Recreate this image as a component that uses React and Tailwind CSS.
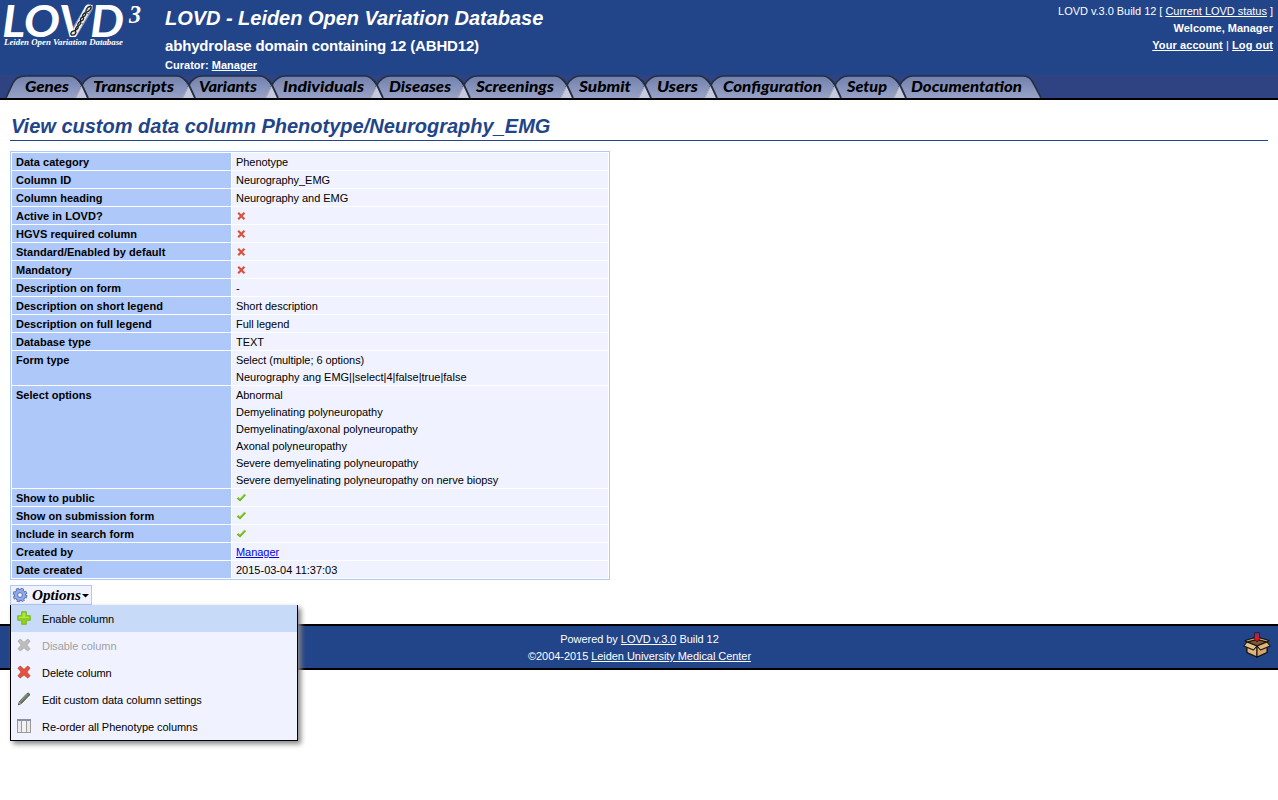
import React from 'react';

const tabs = [
  { label: 'Genes', w: 75, x: 18, tw: 44 },
  { label: 'Transcripts', w: 107, x: 11, tw: 81 },
  { label: 'Variants', w: 83, x: 10, tw: 58 },
  { label: 'Individuals', w: 105, x: 11, tw: 81 },
  { label: 'Diseases', w: 87, x: 12, tw: 62 },
  { label: 'Screenings', w: 103, x: 12, tw: 78 },
  { label: 'Submit', w: 78, x: 12, tw: 52 },
  { label: 'Users', w: 66, x: 12, tw: 41 },
  { label: 'Configuration', w: 124, x: 12, tw: 99 },
  { label: 'Setup', w: 65, x: 12, tw: 40 },
  { label: 'Documentation', w: 135, x: 11, tw: 111 },
];

function Tab({ label, w, x, tw, first, last }) {
  const right = last
    ? `H${w - 12} Q${w - 6} 1 ${w - 3} 6 Q${w} 11 ${w + 6} 23`
    : `H${w - 12} Q${w - 6} 1 ${w} 10 L${w + 6} 23`;
  const left = first ? 'M-1 23 L6 8 Q9 1 19 1' : 'M-6 23 L0 10 Q5 1 13 1';
  return (
    <li className="h-[23px] shrink-0" style={{ width: w }}>
      <a href="#">
        <svg width={w} height="23" className="block overflow-visible">
          <path d={`${left} ${right} Z`} fill="url(#tabFill)" />
          <path d={`${left} ${right}`} fill="none" stroke="#262e42" strokeWidth="1.6" />
          {!first && <path d="M-7 23 L0 10 L6 23 Z" fill="#c5cae0" />}
          {!first && <path d="M-6.5 23 L-1 12" stroke="#a5a9b6" strokeWidth="1.6" />}
          {!first && <path d="M-4 4.5 L0 10 L6 23" fill="none" stroke="#262e42" strokeWidth="1.8" />}
          <text x={x} y="17" textLength={tw} lengthAdjust="spacingAndGlyphs" className="fill-black font-['Lato',sans-serif] text-[15.5px] font-black italic">{label}</text>
        </svg>
      </a>
    </li>
  );
}

const crossPath = 'M1 3 L3 1 L6.5 4.2 L10 1 L12 3 L9 6.5 L12 10 L10 12 L6.5 9 L3 12 L1 10 L4 6.5 Z';

function Cross({ fill, stroke }) {
  return (
    <svg width="14" height="14" viewBox="0 0 13 13" className="block">
      <path d={crossPath} fill={fill} stroke={stroke} strokeWidth=".9" />
    </svg>
  );
}

const No = () => (
  <span className="flex h-[17px] items-center pl-px">
    <svg width="9" height="8" viewBox="0 0 9 8">
      <path d="M1.2 .8 L7.4 7.2 M7.4 .8 L1.2 7.2" stroke="#d9503f" strokeWidth="2.2" />
    </svg>
  </span>
);

const Yes = () => (
  <span className="flex h-[17px] items-center">
    <svg width="11" height="9" viewBox="0 0 11 9">
      <path d="M1.5 4.8 L4 7 L9.2 1.5" fill="none" stroke="#6fb31e" strokeWidth="2.2" />
      <path d="M2 4.5 L4 6.2 L9.2 1" fill="none" stroke="#96dc30" strokeWidth="1" />
    </svg>
  </span>
);

const rows = [
  ['Data category', 'Phenotype'],
  ['Column ID', 'Neurography_EMG'],
  ['Column heading', 'Neurography and EMG'],
  ['Active in LOVD?', <No />],
  ['HGVS required column', <No />],
  ['Standard/Enabled by default', <No />],
  ['Mandatory', <No />],
  ['Description on form', '-'],
  ['Description on short legend', 'Short description'],
  ['Description on full legend', 'Full legend'],
  ['Database type', 'TEXT'],
  ['Form type', <>Select (multiple; 6 options)<br /><span className="tracking-normal">Neurography ang EMG||select|4|false|true|false</span></>],
  ['Select options', <>Abnormal<br />Demyelinating polyneuropathy<br />Demyelinating/axonal polyneuropathy<br />Axonal polyneuropathy<br />Severe demyelinating polyneuropathy<br />Severe demyelinating polyneuropathy on nerve biopsy</>],
  ['Show to public', <Yes />],
  ['Show on submission form', <Yes />],
  ['Include in search form', <Yes />],
  ['Created by', <a href="#" className="text-[#0000ee] underline">Manager</a>],
  ['Date created', <span className="tracking-normal">2015-03-04 11:37:03</span>],
];

const Plus = () => (
  <svg width="14" height="14" viewBox="0 0 14 14">
    <path d="M4.7 .7 H9.3 V4.7 H13.3 V9.3 H9.3 V13.3 H4.7 V9.3 H.7 V4.7 H4.7 Z" fill="#8ed01c" stroke="#79b92b" strokeLinejoin="round" />
    <path d="M5.7 2 H8.3 V5.7 H12 V7 H2 V5.7 H5.7 Z" fill="#b4e63c" />
  </svg>
);

const Pencil = () => (
  <svg width="14" height="14" viewBox="0 0 14 14">
    <path d="M1.5 12.8 L2.4 9.6 L10 1.5 Q11.5 .5 12.6 2 L12.3 3.3 L4.5 11.4 Z" fill="#6b7c62" stroke="#42483d" strokeWidth=".8" />
    <path d="M3.2 9.6 L10.6 1.8" stroke="#9aa78f" strokeWidth="1" />
    <path d="M1.3 13 L2.2 10 L4.2 11.6 Z" fill="#b59d79" />
    <path d="M1.2 13 L1.7 11.6 L2.6 12.3 Z" fill="#222" />
  </svg>
);

const Columns = () => (
  <svg width="14" height="14" viewBox="0 0 14 14" shapeRendering="crispEdges">
    <rect width="14" height="14" fill="#999" />
    <rect width="14" height="2" fill="#8590ad" />
    <rect x="1" y="2" width="3" height="11" fill="#eaeaea" />
    <rect x="5" y="2" width="4" height="11" fill="#f2f2f2" />
    <rect x="10" y="2" width="3" height="11" fill="#eaeaea" />
  </svg>
);

const menu = [
  { label: 'Enable column', icon: <Plus />, cls: 'bg-[#c7dbf8]' },
  { label: 'Disable column', icon: <Cross fill="#bdbdbd" stroke="#aaaaaa" />, cls: 'text-[#a0a0a0]' },
  { label: 'Delete column', icon: <Cross fill="#e5523e" stroke="#c63b2d" />, cls: '' },
  { label: 'Edit custom data column settings', icon: <Pencil />, cls: '' },
  { label: 'Re-order all Phenotype columns', icon: <Columns />, cls: '' },
];

function Logo() {
  return (
    <svg width="150" height="50" className="block shrink-0">
      <g className="fill-white italic">
        <text x="2" y="37" textLength="122" lengthAdjust="spacingAndGlyphs" className="font-['Lato',sans-serif] text-[43px] font-bold">LOVD</text>
        <text x="129" y="23" textLength="12" lengthAdjust="spacingAndGlyphs" className="font-['Liberation_Serif',serif] text-[25px] font-bold">3</text>
      </g>
      <text x="4" y="45" textLength="119" lengthAdjust="spacingAndGlyphs" className="fill-white font-['Liberation_Serif',serif] text-[8.5px] font-bold italic">Leiden Open Variation Database</text>
      <path d="M74 33 L89 8" stroke="#ffffff" strokeOpacity=".45" strokeWidth="8" strokeLinecap="round" />
      <path d="M74 33 L89 8" stroke="#e8ecf2" strokeWidth="5" strokeLinecap="round" />
      <path d="M71 35 C69 29 80 32 78 26 S86 22 83 17 S93 13 91 6" fill="none" stroke="#1c1c1c" strokeWidth="1.3" />
      <path d="M71 35 C80 36 72 28 78 26 S77 18 83 17 S82 8 91 6" fill="none" stroke="#1c1c1c" strokeWidth="1.3" />
      <path d="M73 31 l4 2 M79 22 l4 2 M84 12 l5 2 M86 9 l4 2" stroke="#555" strokeWidth=".8" />
    </svg>
  );
}

function Gear() {
  return (
    <svg width="16" height="16" viewBox="0 0 16 16" className="shrink-0">
      <circle cx="8" cy="8" r="6" fill="none" stroke="#50659b" strokeWidth="2.6" strokeDasharray="2.9 1.812" />
      <circle cx="8" cy="8" r="5.7" fill="#8fabed" stroke="#5870ac" strokeWidth="1" />
      <circle cx="8" cy="8" r="5.8" fill="none" stroke="#8fabed" strokeWidth="1.6" strokeDasharray="1.8 2.755" strokeDashoffset="-.5" />
      <circle cx="8" cy="8" r="2.4" fill="#f0f3ff" stroke="#5870ac" strokeWidth="1" />
    </svg>
  );
}

function Box() {
  return (
    <svg width="28" height="26" viewBox="0 0 28 26" className="block">
      <g stroke="#15130f" strokeWidth="1.1" strokeLinejoin="round">
        <path d="M4 10 L14 7 L24 10 V20.5 L14 25 L4 20.5 Z" fill="#c89961" />
        <path d="M4 10 L14 7 L24 10 L14 14 Z" fill="#7a5734" />
        <path d="M4 12 L14 15 V25 L4 20.5 Z" fill="#dfb57f" />
        <path d="M24 12 L14 15 V25 L24 20.5 Z" fill="#d3a66d" />
        <path d="M4 10 L.8 14 L10.5 18 L14 14 Z" fill="#e6c190" />
        <path d="M24 10 L27.2 14 L17.5 18 L14 14 Z" fill="#e0b47b" />
        <path d="M4 10 L2 8.5 L12 5.5 L14 7.5 Z" fill="#cf9f67" />
        <path d="M24 10 L26 8.5 L16 5.5 L14 7.5 Z" fill="#cf9f67" />
      </g>
      <path d="M11.5 .6 H16.5 V6 H17.5 L14 10 L10.5 6 H11.5 Z" fill="url(#arrowFill)" stroke="#35132c" strokeWidth=".8" />
    </svg>
  );
}

export default function App() {
  return (
    <div className="h-[800px] w-full overflow-hidden bg-white font-['Liberation_Sans',Arial,sans-serif] text-[11px] leading-[17px] text-black">
      <svg width="0" height="0" className="absolute">
        <defs>
          <linearGradient id="tabFill" x1="0" y1="0" x2="0" y2="1"><stop offset="0" stopColor="#7180ad" /><stop offset="1" stopColor="#98a2c6" /></linearGradient>
          <linearGradient id="arrowFill" x1="0" y1="0" x2="0" y2="1"><stop offset="0" stopColor="#52408a" /><stop offset=".6" stopColor="#e31a20" /><stop offset="1" stopColor="#e00000" /></linearGradient>
        </defs>
      </svg>
      <header className="flex h-[75px] bg-[#224488] text-white">
        <Logo />
        <div className="ml-[15px] flex-1 font-bold">
          <h1 className="pt-[6px] text-[20px] leading-[24px] tracking-[-0.03px] italic">LOVD - Leiden Open Variation Database</h1>
          <h2 className="pt-[7px] text-[15px] leading-[18px] tracking-[-0.17px]">abhydrolase domain containing 12 (ABHD12)</h2>
          <p className="pt-[2px] tracking-[0.03px]">Curator: <a href="#" className="underline">Manager</a></p>
        </div>
        <div className="pt-[3px] pr-[5px] text-right">
          <p className="tracking-[-0.03px]">LOVD v.3.0 Build 12 [ <a href="#" className="underline">Current LOVD status</a> ]</p>
          <p className="font-bold">Welcome, Manager</p>
          <p className="tracking-[0.09px]"><a href="#" className="font-bold underline">Your account</a> | <a href="#" className="font-bold underline">Log out</a></p>
        </div>
      </header>
      <nav className="h-[25px] border-b-2 border-black bg-[#2f4383]">
        <ul className="flex pl-[7px]">
          {tabs.map((t, i) => <Tab key={t.label} {...t} first={i === 0} last={i === tabs.length - 1} />)}
        </ul>
      </nav>
      <main className="h-[524px] px-[10px] pt-[13px]">
        <h2 className="h-[28px] border-b border-[#224488] pl-px text-[20px] leading-[26px] font-bold text-[#224488] italic">View custom data column Phenotype/Neurography_EMG</h2>
        <div className="mt-[10px] flex w-[600px] flex-col gap-px border border-[#aec8fa] p-px">
          {rows.map(([name, value]) => (
            <div key={name} className="flex gap-px">
              <div className="w-[219px] bg-[#aec8fa] pl-[4px] font-bold tracking-[0.03px]">
                <div className="-mb-px pt-px">{name}</div>
              </div>
              <div className="flex-1 bg-[#f0f3ff] pl-[4px] tracking-[-0.05px]">
                {typeof value === 'object' && (value.type === No || value.type === Yes) ? value : <div className="-mb-px pt-px">{value}</div>}
              </div>
            </div>
          ))}
        </div>
        <div className="relative mt-[5px] w-[82px]">
          <button className="flex h-[20px] w-[82px] items-center border border-[#aec8fa] bg-[#f0f3ff] pl-px">
            <Gear />
            <svg width="62" height="18" className="block">
              <text x="4" y="14" textLength="49" lengthAdjust="spacingAndGlyphs" className="fill-black font-['Liberation_Serif',serif] text-[15px] font-bold italic">Options</text>
              <path d="M54 8 H61 L57.5 11.5 Z" />
            </svg>
          </button>
          <ul className="absolute top-[20px] left-0 z-10 w-[288px] border border-t-0 border-black bg-[#f0f3ff] tracking-[-0.05px] shadow-[3px_3px_5px_#888]">
            {menu.map((m) => (
              <li key={m.label} className={`flex h-[27px] items-center pt-px ${m.cls}`}>
                <span className="mb-[3px] ml-[6px] flex w-[25px]">{m.icon}</span>{m.label}
              </li>
            ))}
          </ul>
        </div>
      </main>
      <footer className="flex h-[46px] border-y-2 border-black bg-[#224488] text-white">
        <div className="w-[36px]" />
        <div className="flex-1 pt-[5px] text-center tracking-[-0.05px]">
          <p>Powered by <a href="#" className="underline">LOVD v.3.0</a> Build 12</p>
          <p>©2004-2015 <a href="#" className="underline">Leiden University Medical Center</a></p>
        </div>
        <div className="w-[35px] pt-[6px]"><Box /></div>
      </footer>
    </div>
  );
}
